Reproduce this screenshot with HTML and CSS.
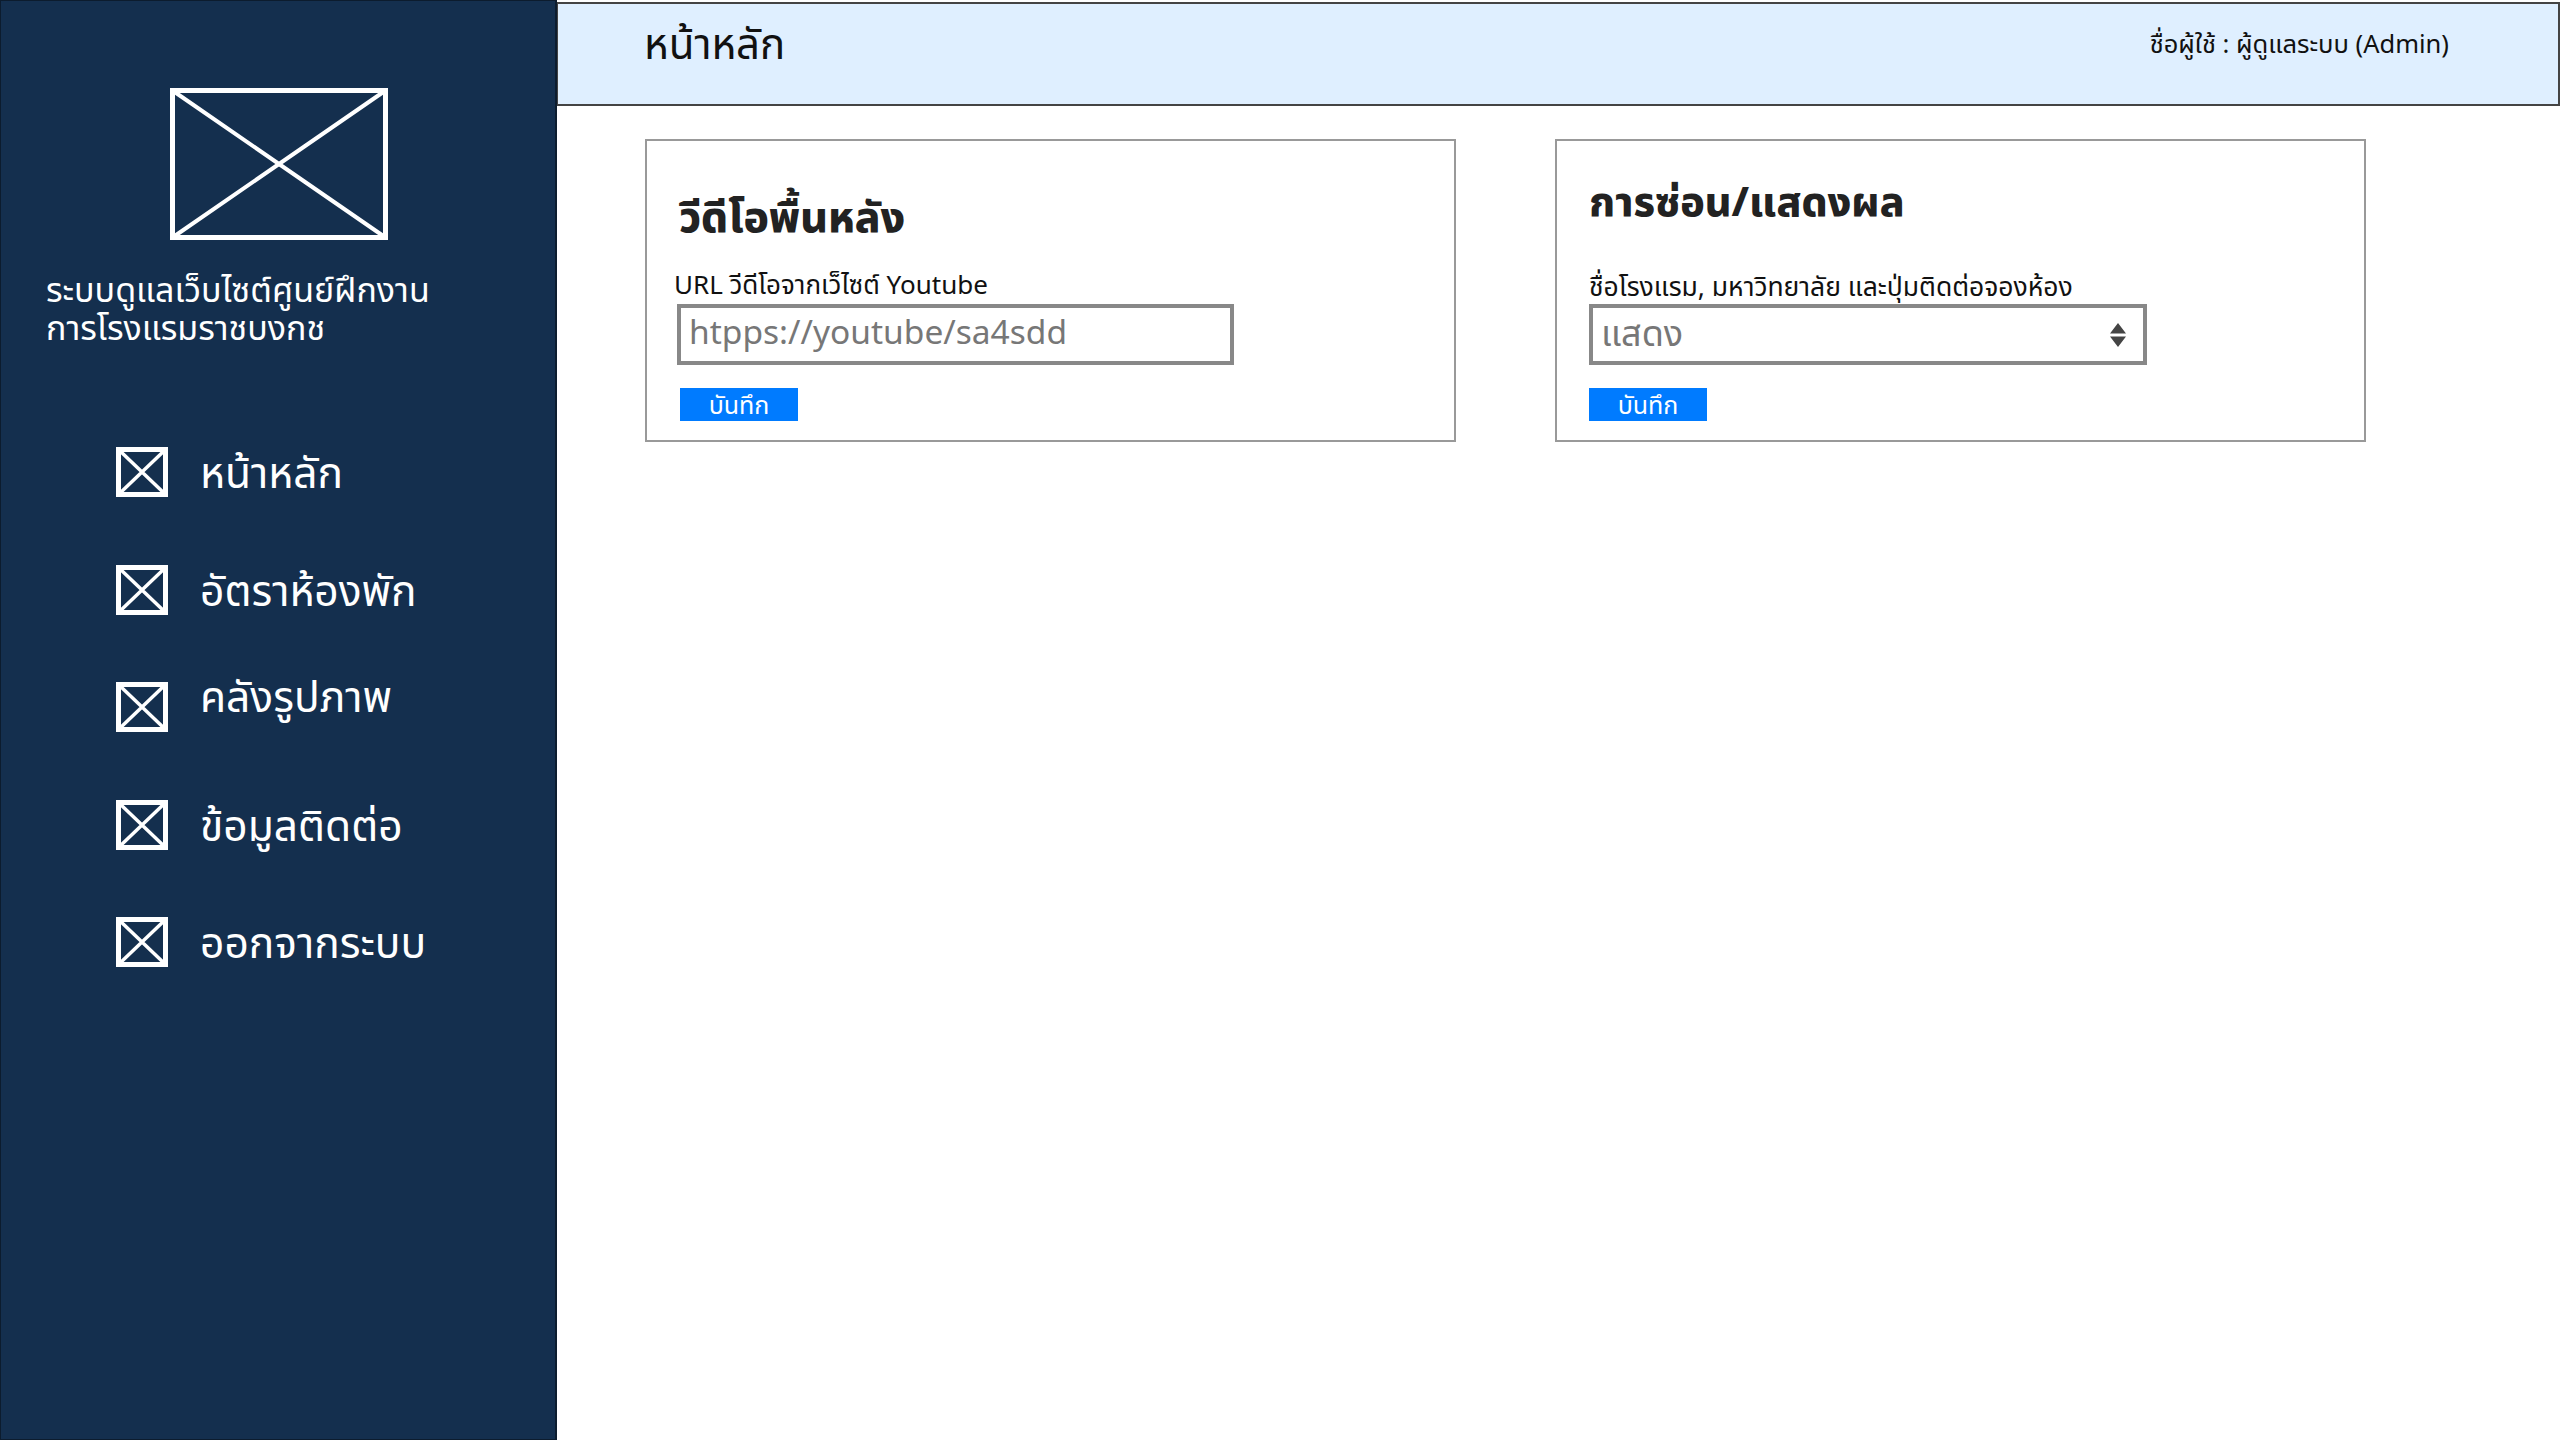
FILE: index.html
```html
<!DOCTYPE html>
<html lang="th">
<head>
<meta charset="utf-8">
<title>หน้าหลัก</title>
<link rel="stylesheet" href="styles.css">
</head>
<body>
<div class="app">
  <aside class="sidebar">
    <svg class="logo" viewBox="0 0 218 152" aria-hidden="true"><path class="frame" d="M2.500 2.500H215.500V149.500H2.500Z"/><path class="cross" d="M2.500 2.500L215.500 149.500M215.500 2.500L2.500 149.500"/></svg>
    <p class="brand">ระบบดูแลเว็บไซต์ศูนย์ฝึกงาน<br>การโรงแรมราชบงกช</p>
    <nav class="nav">
      <a class="nav-item"><svg class="nav-icon" viewBox="0 0 52 50"><path class="frame" d="M2.500 2.500H49.500V47.500H2.500Z"/><path class="cross" d="M2.500 2.500L49.500 47.500M49.500 2.500L2.500 47.500"/></svg><span class="nav-label">หน้าหลัก</span></a>
      <a class="nav-item"><svg class="nav-icon" viewBox="0 0 52 50"><path class="frame" d="M2.500 2.500H49.500V47.500H2.500Z"/><path class="cross" d="M2.500 2.500L49.500 47.500M49.500 2.500L2.500 47.500"/></svg><span class="nav-label">อัตราห้องพัก</span></a>
      <a class="nav-item"><svg class="nav-icon" viewBox="0 0 52 50"><path class="frame" d="M2.500 2.500H49.500V47.500H2.500Z"/><path class="cross" d="M2.500 2.500L49.500 47.500M49.500 2.500L2.500 47.500"/></svg><span class="nav-label nav-label-high">คลังรูปภาพ</span></a>
      <a class="nav-item"><svg class="nav-icon" viewBox="0 0 52 50"><path class="frame" d="M2.500 2.500H49.500V47.500H2.500Z"/><path class="cross" d="M2.500 2.500L49.500 47.500M49.500 2.500L2.500 47.500"/></svg><span class="nav-label">ข้อมูลติดต่อ</span></a>
      <a class="nav-item"><svg class="nav-icon" viewBox="0 0 52 50"><path class="frame" d="M2.500 2.500H49.500V47.500H2.500Z"/><path class="cross" d="M2.500 2.500L49.500 47.500M49.500 2.500L2.500 47.500"/></svg><span class="nav-label">ออกจากระบบ</span></a>
    </nav>
  </aside>
  <div class="main">
    <header class="topbar">
      <h1 class="page-title">หน้าหลัก</h1>
      <span class="user">ชื่อผู้ใช้ : ผู้ดูแลระบบ (Admin)</span>
    </header>
    <div class="cards">
      <section class="card">
        <h2 class="card-title card-title-low">วีดีโอพื้นหลัง</h2>
        <label class="field-label field-label-url">URL วีดีโอจากเว็ไซต์ Youtube</label>
        <div class="control control-url">htpps://youtube/sa4sdd</div>
        <button class="save save-url">บันทึก</button>
      </section>
      <section class="card">
        <h2 class="card-title card-title-wide">การซ่อน/แสดงผล</h2>
        <label class="field-label field-label-vis">ชื่อโรงแรม, มหาวิทยาลัย และปุ่มติดต่อจองห้อง</label>
        <div class="control control-select">แสดง
          <svg class="updown" viewBox="0 0 18 24" aria-hidden="true"><path d="M9 0L17 10.500H1ZM1 13.500H17L9 24Z"/></svg>
        </div>
        <button class="save">บันทึก</button>
      </section>
    </div>
  </div>
</div>
</body>
</html>
```

FILE: styles.css
```css
* { box-sizing: border-box; }
html, body { margin: 0; padding: 0; }
body {
  background: #fff;
  font-family: "Noto Sans", "Noto Sans Thai", "Open Sans", sans-serif;
  color: #1c1c1c;
}
.app { display: flex; width: 2560px; height: 1440px; overflow: hidden; }

.sidebar {
  width: 557px;
  flex: none;
  background: #142f4e;
  border: 1px solid #0c1c2e;
  border-right: 2px solid #0c1c2e;
  padding-top: 87px;
  color: #fff;
}
.logo { display: block; width: 218px; height: 152px; margin-left: 169px; }
.frame, .cross { fill: none; stroke: #fff; }
.frame { stroke-width: 5; }
.cross { stroke-width: 4; }
.nav-icon .cross { stroke-width: 3.500; }
.brand {
  margin: 30px 0 0 45px;
  font-size: 34px;
  line-height: 38px;
}
.nav { margin-top: 101px; display: flex; flex-direction: column; gap: 67.5px; padding-left: 115px; }
.nav-item { display: flex; align-items: center; gap: 32px; height: 50px; }
.nav-icon { width: 52px; height: 50px; flex: none; }
.nav-label { font-size: 42.500px; line-height: 50px; }
.nav-label-high { padding-bottom: 22px; }

.main { flex: 1; min-width: 0; }
.topbar {
  margin-top: 2px;
  height: 104px;
  background: #dfefff;
  border: 2px solid #444;
  border-left-width: 1px;
  display: flex;
  align-items: center;
  justify-content: space-between;
  padding: 0 109px 22px 86px;
  color: #111;
}
.page-title { margin: 0; font-size: 42px; font-weight: 400; line-height: 50px; }
.user { font-size: 25.500px; line-height: 34px; }

.cards { display: flex; gap: 99px; padding: 33px 0 0 88px; }
.card {
  width: 811px;
  height: 303px;
  border: 2px solid #999;
  padding: 0 32px;
  background: #fff;
}
.card-title { margin: 34px 0 0; font-size: 42.500px; font-weight: 800; line-height: 50px; color: #222; }
.card-title-low { margin-top: 50px; }
.card-title-wide { font-size: 41px; }
.field-label { display: block; font-size: 26px; line-height: 32px; color: #111; }
.field-label-url { margin: 27px 0 4px -5px; }
.field-label-vis { margin: 45px 0 2px; font-size: 26.500px; }
.control {
  width: 558px;
  height: 61px;
  border: 4px solid #888;
  font-size: 36px;
  line-height: 46px;
  color: #777;
  padding-left: 8px;
  display: flex;
  align-items: center;
  justify-content: space-between;
}
.control-url { margin-left: -2px; width: 557px; font-size: 33.500px; padding-bottom: 7px; }
.control-select { padding-right: 16px; padding-bottom: 4px; }
.updown { width: 18px; height: 24px; flex: none; margin-top: 4px; }
.updown path { fill: #444; }
.save {
  display: block;
  margin-top: 23px;
  width: 118px;
  height: 33px;
  border: 0;
  padding: 0;
  background: #007bff;
  color: #fff;
  font-family: inherit;
  font-size: 25px;
  line-height: 33px;
}
.save-url { margin-left: 1px; }
```
